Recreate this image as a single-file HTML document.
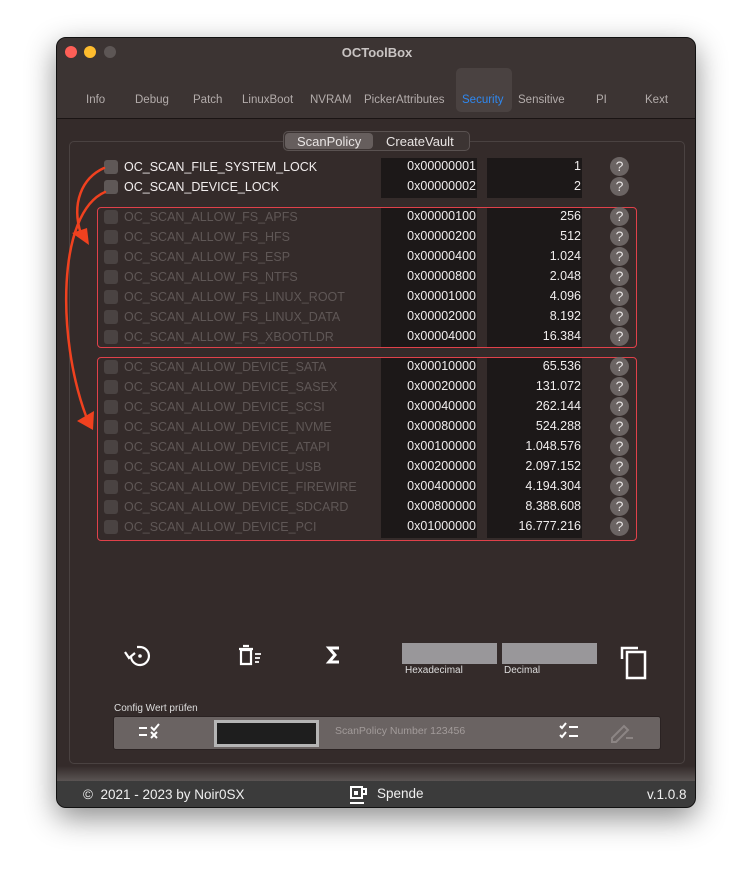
<!DOCTYPE html>
<html><head><meta charset="utf-8"><style>
*{margin:0;padding:0;box-sizing:border-box}
body{width:752px;height:882px;background:#fff;position:relative;font-family:"Liberation Sans",sans-serif;overflow:hidden}
.win{position:absolute;left:56px;top:37px;width:640px;height:771px;background:#342b2a;border-radius:10px;border:1px solid #111;box-shadow:0 10px 30px rgba(0,0,0,.45);overflow:hidden}
.tb{position:absolute;left:0;top:0;width:640px;height:81px;background:#3c3433;border-bottom:1px solid #1a1414}
.dot{position:absolute;top:8px;width:12px;height:12px;border-radius:50%}
.title{position:absolute;top:7px;width:100%;text-align:center;color:#c9c4c3;font-size:13px;font-weight:bold}
.tab{position:absolute;top:56px;font-size:11.5px;color:#b3acab}
.sel{position:absolute;left:399px;top:30px;width:56px;height:44px;background:#4a4241;border-radius:5px}
.panel{position:absolute;left:12px;top:103px;width:616px;height:623px;border:1px solid #4a4241;border-radius:5px}
.seg{position:absolute;left:226px;top:93px;width:187px;height:20px;background:#3c3433;border:1px solid #5a5251;border-radius:5px;font-size:13px;color:#e8e4e3}
.seg span{position:absolute;top:2px}
.segon{position:absolute;left:1px;top:1px;width:88px;height:16px;background:#665e5d;border-radius:4px}
.a{position:absolute}
.lbl{position:absolute;left:67px;font-size:12.5px;color:#5f5756}
.lbl.w{color:#f2eeee}
.cb{position:absolute;left:47px;width:14px;height:14px;border-radius:3px;background:#4a4342}
.cb.w{background:#5f5857}
.hexc{position:absolute;left:324px;width:96px;background:#1c1818}
.decc{position:absolute;left:430px;width:95px;background:#1c1818}
.hx{position:absolute;left:324px;width:96px;text-align:right;font-size:12.5px;color:#f0eded;padding-right:1px}
.dc{position:absolute;left:430px;width:94px;text-align:right;font-size:12.5px;color:#f0eded}
.q{position:absolute;left:553px;width:19px;height:19px;border-radius:50%;background:#6b6463;color:#e9e5e5;font-size:14px;text-align:center;line-height:19px}
.rb{position:absolute;left:40px;width:540px;border:1px solid #e0414a;border-radius:4px}
.foot{position:absolute;left:0;top:743px;width:640px;height:28px;background:#3b3b3b;color:#f0f0f0;font-size:13.5px}
</style></head><body>
<div class="win">
<div class="tb">
<div class="dot" style="left:8px;background:#fe5f57"></div>
<div class="dot" style="left:27px;background:#febc2e"></div>
<div class="dot" style="left:47px;background:#5d5655"></div>
<div class="title">OCToolBox</div>
<div class="sel"></div>
<div class="tab" style="left:29px">Info</div>
<div class="tab" style="left:78px">Debug</div>
<div class="tab" style="left:136px">Patch</div>
<div class="tab" style="left:185px">LinuxBoot</div>
<div class="tab" style="left:253px">NVRAM</div>
<div class="tab" style="left:307px">PickerAttributes</div>
<div class="tab" style="left:405px;color:#2f88f0">Security</div>
<div class="tab" style="left:461px">Sensitive</div>
<div class="tab" style="left:539px">PI</div>
<div class="tab" style="left:588px">Kext</div>
</div>
<div class="panel"></div>
<div class="seg"><div class="segon"></div><span style="left:13px">ScanPolicy</span><span style="left:102px">CreateVault</span></div>

<div class="hexc" style="top:120px;height:40px"></div><div class="decc" style="top:120px;height:40px"></div>
<div class="hexc" style="top:170px;height:139px"></div><div class="decc" style="top:170px;height:139px"></div>
<div class="hexc" style="top:320px;height:180px"></div><div class="decc" style="top:320px;height:180px"></div>
<div class="rb" style="top:169px;height:141px"></div>
<div class="rb" style="top:319px;height:184px"></div>

<div class="cb w" style="top:122px"></div><div class="lbl w" style="top:122px">OC_SCAN_FILE_SYSTEM_LOCK</div><div class="hx" style="top:121px">0x00000001</div><div class="dc" style="top:121px">1</div><div class="q" style="top:119px">?</div>
<div class="cb w" style="top:142px"></div><div class="lbl w" style="top:142px">OC_SCAN_DEVICE_LOCK</div><div class="hx" style="top:141px">0x00000002</div><div class="dc" style="top:141px">2</div><div class="q" style="top:139px">?</div>

<div class="cb" style="top:172px"></div><div class="lbl" style="top:172px">OC_SCAN_ALLOW_FS_APFS</div><div class="hx" style="top:171px">0x00000100</div><div class="dc" style="top:171px">256</div><div class="q" style="top:169px">?</div>
<div class="cb" style="top:192px"></div><div class="lbl" style="top:192px">OC_SCAN_ALLOW_FS_HFS</div><div class="hx" style="top:191px">0x00000200</div><div class="dc" style="top:191px">512</div><div class="q" style="top:189px">?</div>
<div class="cb" style="top:212px"></div><div class="lbl" style="top:212px">OC_SCAN_ALLOW_FS_ESP</div><div class="hx" style="top:211px">0x00000400</div><div class="dc" style="top:211px">1.024</div><div class="q" style="top:209px">?</div>
<div class="cb" style="top:232px"></div><div class="lbl" style="top:232px">OC_SCAN_ALLOW_FS_NTFS</div><div class="hx" style="top:231px">0x00000800</div><div class="dc" style="top:231px">2.048</div><div class="q" style="top:229px">?</div>
<div class="cb" style="top:252px"></div><div class="lbl" style="top:252px">OC_SCAN_ALLOW_FS_LINUX_ROOT</div><div class="hx" style="top:251px">0x00001000</div><div class="dc" style="top:251px">4.096</div><div class="q" style="top:249px">?</div>
<div class="cb" style="top:272px"></div><div class="lbl" style="top:272px">OC_SCAN_ALLOW_FS_LINUX_DATA</div><div class="hx" style="top:271px">0x00002000</div><div class="dc" style="top:271px">8.192</div><div class="q" style="top:269px">?</div>
<div class="cb" style="top:292px"></div><div class="lbl" style="top:292px">OC_SCAN_ALLOW_FS_XBOOTLDR</div><div class="hx" style="top:291px">0x00004000</div><div class="dc" style="top:291px">16.384</div><div class="q" style="top:289px">?</div>

<div class="cb" style="top:322px"></div><div class="lbl" style="top:322px">OC_SCAN_ALLOW_DEVICE_SATA</div><div class="hx" style="top:321px">0x00010000</div><div class="dc" style="top:321px">65.536</div><div class="q" style="top:319px">?</div>
<div class="cb" style="top:342px"></div><div class="lbl" style="top:342px">OC_SCAN_ALLOW_DEVICE_SASEX</div><div class="hx" style="top:341px">0x00020000</div><div class="dc" style="top:341px">131.072</div><div class="q" style="top:339px">?</div>
<div class="cb" style="top:362px"></div><div class="lbl" style="top:362px">OC_SCAN_ALLOW_DEVICE_SCSI</div><div class="hx" style="top:361px">0x00040000</div><div class="dc" style="top:361px">262.144</div><div class="q" style="top:359px">?</div>
<div class="cb" style="top:382px"></div><div class="lbl" style="top:382px">OC_SCAN_ALLOW_DEVICE_NVME</div><div class="hx" style="top:381px">0x00080000</div><div class="dc" style="top:381px">524.288</div><div class="q" style="top:379px">?</div>
<div class="cb" style="top:402px"></div><div class="lbl" style="top:402px">OC_SCAN_ALLOW_DEVICE_ATAPI</div><div class="hx" style="top:401px">0x00100000</div><div class="dc" style="top:401px">1.048.576</div><div class="q" style="top:399px">?</div>
<div class="cb" style="top:422px"></div><div class="lbl" style="top:422px">OC_SCAN_ALLOW_DEVICE_USB</div><div class="hx" style="top:421px">0x00200000</div><div class="dc" style="top:421px">2.097.152</div><div class="q" style="top:419px">?</div>
<div class="cb" style="top:442px"></div><div class="lbl" style="top:442px">OC_SCAN_ALLOW_DEVICE_FIREWIRE</div><div class="hx" style="top:441px">0x00400000</div><div class="dc" style="top:441px">4.194.304</div><div class="q" style="top:439px">?</div>
<div class="cb" style="top:462px"></div><div class="lbl" style="top:462px">OC_SCAN_ALLOW_DEVICE_SDCARD</div><div class="hx" style="top:461px">0x00800000</div><div class="dc" style="top:461px">8.388.608</div><div class="q" style="top:459px">?</div>
<div class="cb" style="top:482px"></div><div class="lbl" style="top:482px">OC_SCAN_ALLOW_DEVICE_PCI</div><div class="hx" style="top:481px">0x01000000</div><div class="dc" style="top:481px">16.777.216</div><div class="q" style="top:479px">?</div>

<div class="a" style="left:345px;top:605px;width:95px;height:21px;background:#99979a"></div>
<div class="a" style="left:445px;top:605px;width:95px;height:21px;background:#99979a"></div>
<div class="a" style="left:348px;top:627px;font-size:10px;color:#ddd">Hexadecimal</div>
<div class="a" style="left:447px;top:627px;font-size:10px;color:#ddd">Decimal</div>
<div class="a" style="left:57px;top:665px;font-size:10px;color:#ddd">Config Wert prüfen</div>
<div class="a" style="left:56px;top:678px;width:548px;height:34px;background:#6a6362;border:1px solid #2a2222;border-radius:3px"></div>
<div class="a" style="left:157px;top:682px;width:105px;height:27px;background:#1e1e1e;border:3px solid #b5b5b5"></div>
<div class="a" style="left:278px;top:687px;font-size:10.5px;color:#a29b9a">ScanPolicy Number 123456</div>

<svg class="a" style="left:0;top:0" width="640" height="771">
<g fill="none" stroke="#f0411f" stroke-width="2.5" stroke-linecap="round">
<path d="M47 130 C25 140 14 165 24 196"/>
<path d="M48 154 C0 175 0 300 29 378"/>
</g>
<g fill="#f0411f"><path d="M15 195 L30 190 L32 207 Z"/><path d="M20 383 L37 373 L36 392 Z"/></g>
<g fill="none" stroke="#fff" stroke-width="2.2">
<path d="M74 619 A9 9 0 1 0 83 609 L80 609"/><path d="M68 614 L72 620 L78 615"/>
<path d="M184 612 h10 v14 h-10 z M182 611 h14 M186 608 h6"/><path d="M198 616h6 M198 620h5 M198 624h4" stroke-width="1.8"/>
<path d="M282 610 h-10 l6 7 l-6 7 h10" stroke-width="3"/>
<path d="M565 621 v-11 h16 M570 614 h18 v26 h-18 z" stroke-width="2.5"/>
<path d="M82 690 h8 M82 697 h8 M94 689 l3 3 l5 -6 M94 694 l6 6 M100 694 l-6 6" stroke-width="2"/>
<path d="M503 688 l2 2 l4 -5 M503 697 l2 2 l4 -5 M512 689 h9 M512 698 h9" stroke-width="2"/>
<path d="M555 700 l12 -12 l4 4 l-12 12 h-4 z M569 700 h7" stroke="#8c8584" stroke-width="2"/>
</g>
<circle cx="83" cy="618" r="1.8" fill="#fff"/>
</svg>
<div class="a" style="left:0;top:728px;width:640px;height:15px;background:linear-gradient(#342b2a,#5a5453)"></div>
<div class="foot">
<div class="a" style="left:26px;top:6px">©&nbsp; 2021 - 2023 by Noir0SX</div>
<svg class="a" style="left:290px;top:3px" width="22" height="22"><path d="M4 3 h11 v11 h-11 z M15 5 h4 v5 h-4" fill="none" stroke="#fff" stroke-width="2"/><rect x="7" y="7" width="4" height="4" fill="#fff"/><path d="M3 19 h14" stroke="#fff" stroke-width="2"/></svg>
<div class="a" style="left:320px;top:5px">Spende</div>
<div class="a" style="left:590px;top:6px">v.1.0.8</div>
</div>
</div>
</body></html>
